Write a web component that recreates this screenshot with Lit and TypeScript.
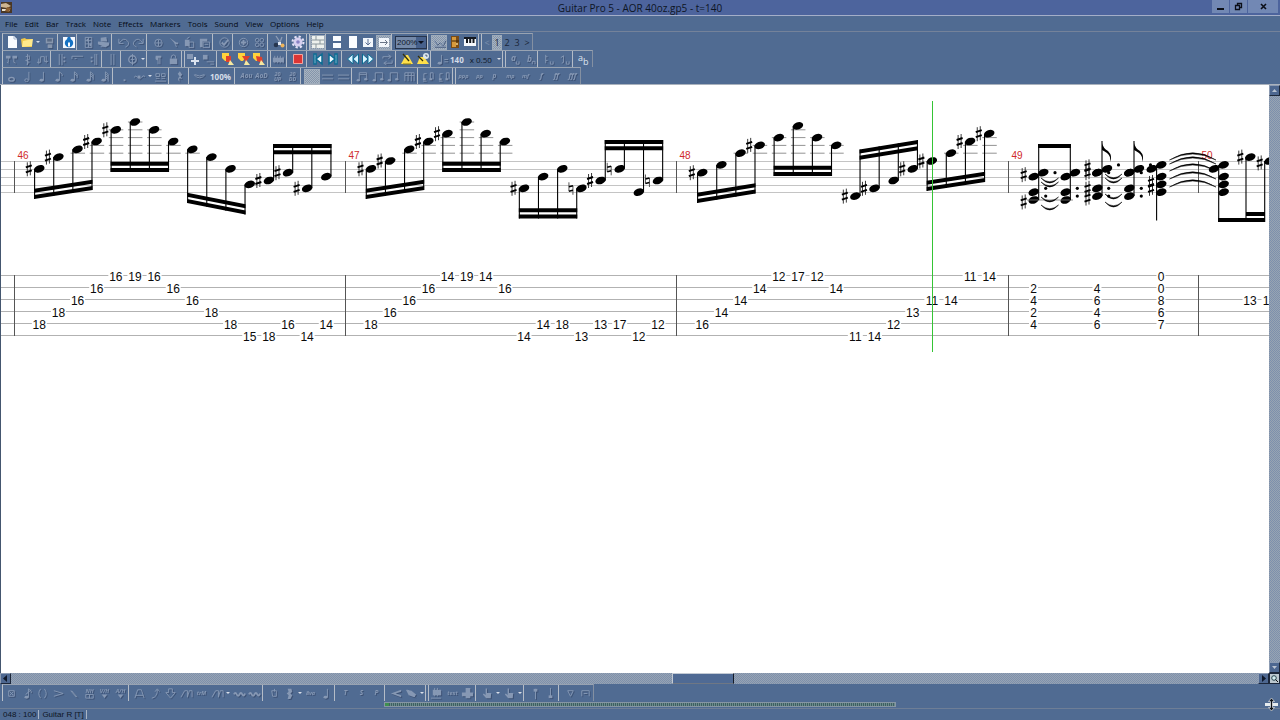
import { LitElement, html, css, svg, nothing } from "lit";
import { customElement } from "lit/decorators.js";
import { classMap } from "lit/directives/class-map.js";
import { styleMap } from "lit/directives/style-map.js";

/* ---------- icons, all on a 14 x 14 grid ---------- */

const line = (d: string) => svg`<path d=${d} fill="none" stroke="currentColor"/>`;
const fill = (d: string, c = "currentColor") => svg`<path d=${d} fill=${c}/>`;
const word = (t: string, size = 6, y = 9) =>
  svg`<text x="7" y=${y} font-size=${size} text-anchor="middle" font-style="italic" font-weight="bold" fill="currentColor">${t}</text>`;

const flagNote = (flags: number, x = 6) => svg`
  <ellipse cx=${x} cy="11" rx="2.2" ry="1.6" fill="currentColor"/>
  <path d="M${x + 2} 11V2" stroke="currentColor" fill="none"/>
  ${Array.from({ length: flags }, (_, i) => svg`<path d="M${x + 2} ${2 + i * 2}l3 2.5v2" stroke="currentColor" fill="none"/>`)}`;

const beamed = (beams: number) => svg`
  <path d="M3.5 11V3h8v7" stroke="currentColor" fill="none"/>
  ${beams > 1 ? line("M3.5 5h8") : nothing}
  <ellipse cx="2.5" cy="11" rx="1.8" ry="1.4" fill="currentColor"/>
  <ellipse cx="10.5" cy="10" rx="1.8" ry="1.4" fill="currentColor"/>`;

const hand = fill("M5 1.500h1.500v5h4.500l-.5 5.500h-5L2 8l1-1 2 1.500z");
const marker = (d: string) => svg`
  <path d="M1 1h7v5l-2 3H4L1 6z" fill="#ffd23c"/><path d=${d} fill="#e0402c"/>
  <path d="M9 8l4 5H7z" fill="#f6e9a0"/>`;

const ICONS: Record<string, unknown> = {
  new: svg`<path d="M3 1h6l3 3v9H3z" fill="#f8fbff"/><path d="M9 1v3h3" fill="none" stroke="#a9b8d0"/>`,
  open: svg`<path d="M1 4l4-1 1 1h6v8H2z" fill="#f1c84a"/><path d="M3 6l10-2-1 7-10 1z" fill="#ffe98c"/>`,
  save: svg`<path d="M3 2h8v6H3z" fill="#8796ad"/><path d="M4.500 3h5v3h-5z" fill="#5a6b86"/><path d="M5 9h5v4H5z" fill="#8796ad"/>`,
  info: svg`<path d="M1 2h12v11H1z" fill="#f4f8ff"/><circle cx="7" cy="8" r="4.200" fill="#1672c4"/><path d="M6 7.500h2v4H6z" fill="#fff"/><circle cx="7" cy="3.500" r="1.800" fill="#1672c4"/>`,
  setup: svg`${line("M3.500 1.500h7v11h-7zM3.500 5h7M3.500 8.500h7M7 1.500v11")}${fill("M5 3h2v3H5zM8 8h2v3H8z")}`,
  print: svg`${fill("M4 2l6-1 1 5H4zM1 6l12 1v3l-4 2-8-3z")}${line("M4 11.500h6")}`,
  undo: line("M2 3v5h5M2.500 7.500Q7 1 11 5T9 12"),
  redo: line("M12 3v5H7M11.500 7.500Q7 1 3 5T5 12"),
  cut: svg`<circle cx="7" cy="7.500" r="4" stroke="currentColor" fill="none"/>${line("M7 4v7M3.500 7.500h7")}`,
  scissors: svg`${fill("M3 2l7 5-1 2zM8 7h4v2H8zM9 8l2 4-2-1z")}`,
  copy: svg`${fill("M2 4h5v7H2z")}${line("M6.500 6.500h5v6h-5zM4 3l3-2")}`,
  paste: svg`${fill("M2 3h8v3H2zM2 6h3v6H2z")}${line("M5.500 6.500h7v6h-7zM7 9h4")}`,
  check: svg`<circle cx="7" cy="7" r="5" stroke="currentColor" fill="none"/><path d="M4 7l2.500 2.500L11 4" stroke="currentColor" stroke-width="2" fill="none"/>`,
  add: svg`<circle cx="7" cy="7" r="4.500" fill="none" stroke="currentColor"/><path d="M7 4v6M4 7h6" stroke="currentColor" stroke-width="2"/>`,
  clover: svg`<g fill="none" stroke="currentColor"><circle cx="4.500" cy="4.500" r="2"/><circle cx="9.500" cy="4.500" r="2"/><circle cx="4.500" cy="9.500" r="2"/><circle cx="9.500" cy="9.500" r="2"/></g>`,
  tuner: svg`<path d="M4 1l4 6 2-5" stroke="#8d9cb5" stroke-width="1.300" fill="none"/><circle cx="4" cy="10" r="2.300" fill="#26364f"/><circle cx="10.500" cy="10.500" r="2" fill="#efb45a"/><path d="M6 7h3v3H6z" fill="#dfe6f2"/>`,
  gear: svg`<circle cx="7" cy="7" r="4.500" fill="#d7d0f0"/><circle cx="7" cy="7" r="5.500" fill="none" stroke="#e4e1f6" stroke-width="2" stroke-dasharray="2.300 2"/><circle cx="7" cy="7" r="1.800" fill="#8a82c4"/>`,
  multi: svg`<path d="M1 1h12v12H1z" fill="#eef1ee"/><path d="M1 5h12M1 9h12M5 1v4M9 5v4M5 9v4" stroke="#8b979c" fill="none"/>`,
  pages: svg`<path d="M3 1h8v5H3zM3 8h8v5H3z" fill="#fafcff"/>`,
  page: svg`<path d="M3 1h8v12H3z" fill="#fafcff"/>`,
  pagedown: svg`<path d="M2 3h10v9H2z" fill="#f2f6fb"/><path d="M7 4v6M4.500 7.500L7 10l2.500-2.500" stroke="#5b6f93" fill="none"/>`,
  pageright: svg`<path d="M2 3h10v9H2z" fill="#f2f6fb"/><path d="M3 7.500h7M8 5l2.500 2.500L8 10" stroke="#6a7688" fill="none"/>`,
  neck: svg`${line("M1 4l3 5 3-3 3 4 3-6M1 11h12")}`,
  cabinet: svg`<path d="M3 1h8v12H3z" fill="#7a4c16"/><path d="M4 2h4v10H4z" fill="#d79a3c"/><path d="M4 6h7" stroke="#3c2408"/><circle cx="9" cy="9" r="1" fill="#f3d58a"/>`,
  piano: svg`<path d="M1 2h12v9H1z" fill="#f6f8fb"/><path d="M1 2h12v2H1zM3 3h2v5H3zM6.200 3h2v5h-2zM9.500 3h2v5h-2z" fill="#14181f"/>`,
  bars: svg`${fill("M1 3h5v3H1zM8 3h5v3H8z")}${line("M3.500 5v5M9.500 5v5l2 1M2 10l2 1")}`,
  clef: line("M7 1v12M5 4l4-1v4L5 8l4 2-3 2"),
  key: line("M1 10h4V4h4v5h4M3 6v6M11 3v8"),
  repL: svg`${line("M3.500 1v12M6.500 1v12")}${fill("M8 4h2v2H8zM8 8h2v2H8z")}`,
  ending: line("M1 6.500V3.500h12M4 6h2"),
  repR: svg`${line("M10.500 1v12M8.500 1v12")}${fill("M4 4h2v2H4zM4 8h2v2H4z")}`,
  dbl: line("M5.500 1v12M8.500 1v12"),
  coda: svg`<circle cx="7" cy="7" r="4" stroke="currentColor" stroke-width="1.500" fill="none"/>${line("M7 1v12M5 7h4")}`,
  para: svg`${fill("M4 3h6v2H9v7H8V5H7v7H6V8Q3 8 4 3z")}`,
  lock: svg`${fill("M3 6h8v6H3z")}${line("M4.500 6Q4 2 7 2t2.500 4")}`,
  trackadd: svg`${fill("M1 2h6v5H1z")}<path d="M9 5v8M5 9h8" stroke="#dbe3ee" stroke-width="2"/>`,
  trackdel: svg`${fill("M1 2h5v5H1z")}${line("M5 9.500h8M9 12h4")}`,
  mk1: marker("M5 4h5v6H5z"),
  mk2: marker("M5 4h8l-4 6z"),
  mk3: marker("M4 4l6 1 1 6-6-2z"),
  mixer: svg`${fill("M1 5h12v5H1z")}${line("M3 3v8M6 3v8M9 3v8M12 4v7")}`,
  stop: svg`<path d="M2.500 2.500h9v9h-9z" fill="#dd3535" stroke="#f2a7a0"/>`,
  first: svg`<path d="M3 2h2v10H3zM11 2v10L5 7z" fill="#eaf8ff" stroke="#0c6d94" stroke-width="1.500"/>`,
  last: svg`<path d="M9 2h2v10H9zM3 2v10l6-5z" fill="#eaf8ff" stroke="#0c6d94" stroke-width="1.500"/>`,
  rew: svg`<path d="M7 2v10L1.500 7zM12.500 2v10L7 7z" fill="#d8f4ff" stroke="#0c6d94"/>`,
  ffw: svg`<path d="M1.500 2v10L7 7zM7 2v10l5.500-5z" fill="#d8f4ff" stroke="#0c6d94"/>`,
  loop: line("M2 6V4h8M8 2l3 2-3 2M12 8v3H4M6 9l-3 2 3 2"),
  metro: svg`<path d="M6 3h2l5 9H1z" fill="#ffe04a"/><path d="M3 2l6 7" stroke="#33300c" stroke-width="1.300"/><path d="M3 12h8" stroke="#8b7a10"/>`,
  count: svg`<path d="M4 5h4l5 7H1z" fill="#ffe04a"/><path d="M2 4l5 5" stroke="#33300c" stroke-width="1.300"/><circle cx="10" cy="4" r="3" fill="#dbe6ee"/><path d="M10 2.500V4h1.500" stroke="#40526d" fill="none"/>`,
  tempo: svg`${flagNote(0, 4)}${line("M9 7h4M9 9.500h4")}`,
  aU: svg`${word("a", 9, 9)}${line("M10 9v3h3V9")}`,
  bU: svg`${word("b", 9, 10)}${line("M10 12V9h3v3")}`,
  dU: svg`${line("M4 2v9M4 4h2M4 8h2M9 9v3h3V9")}`,
  eU: svg`${line("M3 5l3-2v7l-2 1M9 9v3h3V9")}`,
  ab: svg`<text x="1" y="9" font-size="9" fill="#dfe6f0">a</text><text x="6" y="13" font-size="9" fill="#dfe6f0">b</text>`,
  whole: svg`<ellipse cx="7" cy="10" rx="3" ry="2" stroke="currentColor" stroke-width="1.500" fill="none"/>`,
  half: svg`<ellipse cx="6" cy="11" rx="2" ry="1.500" stroke="currentColor" fill="none"/>${line("M8.500 11V2")}`,
  n0: flagNote(0), n1: flagNote(1), n2: flagNote(2), n3: flagNote(3), n4: flagNote(4),
  dot: fill("M6 10h2v2H6z"),
  tuplet: svg`${line("M1 8q2-3 4 0t4 0 4-1")}${fill("M5 6h3v3H5z")}`,
  group: line("M2 4h4v3H2zM8 4h4v3H8zM2 9h4M8 9h4M1 12h12"),
  rest: svg`${fill("M6 1l3 4-2 2 2 3-3-1q-1 2 1 4-4-2-2-5l1-1-2-3 2-2z")}`,
  tie: svg`${line("M1 5q6 7 12 0M2 5q5 3 10 0")}`,
  dyn1: word("Aou", 7), dyn2: word("AoD", 7),
  dyn3: svg`${word("20", 6, 6)}${word("UP", 6, 12)}`,
  dyn4: svg`${word("20", 6, 6)}${word("DD", 6, 12)}`,
  dither: nothing,
  rows: line("M1 5.500h12M1 9.500h12"),
  bm1: beamed(1), bm2: beamed(2),
  bm3: line("M2 12V3h10v9M2 6h10M5.500 3v9M9 3v9"),
  bm4: svg`${line("M2 10V4h3M9 10V3h3v7M1 12h4")}${fill("M1 9h3v2H1zM8 9h3v2H8z")}`,
  ppp: word("ppp"), pp: word("pp"), p: word("p", 7), mp: word("mp"), mf: word("mf"), f: word("f", 8), ff: word("ff", 8), fff: word("fff", 8),
  dead: line("M5 5l4 4M9 5l-4 4M4 4h6v6H4z"),
  grace: svg`${flagNote(1)}${line("M5 8l6-5")}`,
  ghost: line("M5 2q-4 5 0 10M9 2q4 5 0 10"),
  accent: line("M2 4l10 3-10 3"),
  slash: line("M4 4l6 7M5 4l6 7"),
  har: svg`${word("NH", 6, 6)}${line("M3 8h8v4H3zM7 8v4")}`,
  vib: svg`${word("V/H", 6, 6)}${fill("M4 8h6l-3 4z")}`,
  ah: svg`${word("A/H", 6, 6)}${fill("M4 8h6l-3 4z")}`,
  tri: line("M2 12l3-9h4l3 9M3 9h8"),
  bend: line("M3 12q6-1 6-9M6.500 5L9 2l2.500 3"),
  dive: line("M5 2h4v4h3l-5 6-5-6h3z"),
  slide: line("M1 11l4-7h3v7M8 11l2-7h3v7"),
  trill: word("trM", 6),
  wave: svg`<path d="M1 8q1.500-3 3 0t3 0 3 0 3-1" fill="none" stroke="currentColor" stroke-width="2"/>`,
  pop: line("M4 4h5v6H5zM7 2v3"),
  trem: svg`${fill("M5 2h4l1 3-2 2 2 2-2 4H5l1-4-2-2 2-2z")}`,
  rse: word("8va", 6),
  T: word("T", 7), S: word("S", 7), P: word("P", 7),
  fade: svg`${fill("M1 7l11-4v2L6 7l6 2v2z")}`,
  wah: svg`${fill("M1 3l6 1 5 4-2 3-6-2z")}${line("M3 3l8 8")}`,
  chord: svg`${fill("M3 3h9v6H3z")}${line("M1 12h11M5 1v9M8 1v9")}`,
  text: word("text", 6), block: svg`${fill("M5 1h5v11H5zM1 6h12v4H1z")}`,
  hand,
  up: svg`${line("M7 13V2")}${fill("M5 2h4v3H5z")}`,
  down: svg`${line("M7 1v9")}${fill("M5 9h4v3H5z")}`,
  vee: line("M4 4l3 6 3-6M4 4h6"), frog: line("M3 10V4h8v6M5 7h4"),
};

/* "|" separator, "#" separator with grip, "v" drop-down arrow,
   "name!" pressed, "name+" in full colour */
const ROW1 = "new+ open+ v save | info+ | setup print | undo redo | cut scissors copy paste | check | add clover | tuner+ | gear+ # multi!+ | pages+ page+ pagedown+ pageright!+ | ZOOM | neck! cabinet+ piano+ # PAGER";
const ROW2 = "bars clef key | repL ending repR | dbl | coda v | para lock # trackadd+ trackdel | mk1+ mk2+ mk3+ # mixer | stop+ | first+ last+ | rew+ ffw+ | loop | metro+ count+ | tempo BPM SPEED v # aU bU | dU eU | ab+";
const ROW3 = "whole half n0 n1 n2 n3 n4 | dot tuplet v group | rest | tie PCT | dyn1 dyn2 dyn3 dyn4 | dither! rows rows | bm2 bm1 bm1 bm3 | bm4 bm4 # ppp pp p mp mf f ff fff";
const ROW4 = "dead grace ghost accent slash har vib ah | tri bend dive slide trill slide v wave wave | pop trem v rse n0 | T S P | fade wah v # chord text block | hand v hand v | up down | vee frog";

@customElement("tool-strip")
export class ToolStrip extends LitElement {
  static properties = { items: {}, label: {} };
  declare items: string;
  declare label: string;

  static styles = css`
    :host { display: flex; }
    .strip {
      display: flex; align-items: center; height: 17px; box-sizing: border-box;
      padding-left: 1px; border-top: 1px solid #98a3b2; border-right: 1px solid #8490a2;
      border-left: 1px solid #b9c0ca; margin-left: 2px;
      font: 9px "Open Sans", sans-serif; color: #d5dde9;
    }
    button {
      flex: none; width: 15px; height: 15px; padding: 0; border: 0; background: none;
      color: #8698b4; display: grid; place-items: center; font: inherit;
    }
    button:nth-of-type(even) { width: 16px; }
    button svg { width: 13px; height: 13px; overflow: visible; filter: drop-shadow(1px 1px 0 #3d5275); }
    button.full svg { width: 14px; height: 14px; filter: none; }
    button.on {
      background: repeating-conic-gradient(#a9b4c1 0 25%, #8495ab 0 50%) 0 0 / 2px 2px;
      outline: 1px solid #9eabba; outline-offset: -1px;
    }
    .strip > button.drop { width: 6px; }
    .drop::before { content: ""; border: 2px solid transparent; border-top: 2px solid #d8dee8; border-bottom: 0; }
    .sep { flex: none; width: 4px; height: 16px; box-sizing: border-box; border-left: 1px solid #b4bcc7; border-right: 2px solid transparent; }
    .grip { border-right: 1px solid #b4bcc7; }
    .zoom {
      display: flex; box-sizing: border-box; width: 32px; height: 13px; border: 1px solid #26344c;
      appearance: none; border-radius: 0; background: linear-gradient(#47618c, #47618c) right / 10px 100% no-repeat, #7489a9;
      font: 8px "Liberation Sans", sans-serif; color: #10182a; padding: 0 0 0 1px;
    }
    .combo { display: grid; align-items: center; }
    .combo > * { grid-area: 1 / 1; }
    .combo i { justify-self: end; margin-right: 3px; border: 3px solid transparent; border-top: 3px solid #0c1220; border-bottom: 0; }
    .strip > .pg { width: 10px; color: #1a2538; }
    .strip > .pg.off { color: #7d90ae; }
    .bpm { font-weight: bold; font-size: 8px; }
    .speed { font-size: 8px; color: #0f1828; padding: 0 4px 0 6px; }
    .pct { font-size: 8px; font-weight: bold; width: 27px; text-align: center; }
  `;

  private item(t: string) {
    switch (t) {
      case "|": return html`<span class="sep"></span>`;
      case "#": return html`<span class="sep grip"></span>`;
      case "v": return html`<button class="drop" aria-label="More"></button>`;
      case "ZOOM": return html`<span class="combo"><select class="zoom" aria-label="Zoom"><option>200%</option></select><i></i></span>`;
      case "BPM": return html`<span class="bpm">140</span>`;
      case "SPEED": return html`<span class="speed">x 0.50</span>`;
      case "PCT": return html`<span class="pct">100%</span>`;
      case "PAGER": return ["<", "1", "2", "3", ">"].map(
        (p) => html`<button class=${classMap({ pg: true, off: p === "<", on: p === "1" })}>${p}</button>`);
    }
    const name = t.replace(/[!+]/g, "");
    return html`<button class=${classMap({ on: t.includes("!"), full: t.includes("+") })} aria-label=${name}>
      <svg viewBox="0 0 14 14" aria-hidden="true">${ICONS[name]}</svg></button>`;
  }

  render() {
    return html`<div class="strip" role="toolbar" aria-label=${this.label}>${this.items.split(" ").map((t) => this.item(t))}</div>`;
  }
}

/* ---------- score ---------- */

const TOP = 76;          // first staff line
const HALF = 3.9;        // distance between two neighbouring pitches
const TAB = 190.5;       // first tablature line
const STRING = 12;       // distance between strings
const STEP = 19.13;      // distance between sixteenth notes
const THICK = 4;         // beam thickness

interface Beam { at: number; n: number; up?: boolean; y1: number; y2: number; }
interface Bar { num: number; x: number; first: number; pitch: number[]; marks: string; tab: string; beams: Beam[]; }

const BARS: Bar[] = [
  { num: 46, x: 14.5, first: 39.300, pitch: [2, -1, -3, -5, -8, -10, -8, -5, -3, -1, 2, 6, 5, 3, 7, 4],
    marks: "##.##.......###.",
    tab: "18/5 18/4 16/3 16/2 16/1 19/1 16/1 16/2 16/3 18/4 18/5 15/6 18/6 16/5 14/6 14/5",
    beams: [{ at: 0, n: 4, y1: 114, y2: 105 }, { at: 4, n: 4, y1: 87, y2: 87 }, { at: 8, n: 4, y1: 118, y2: 129.500 }, { at: 12, n: 4, up: true, y1: 59, y2: 59 }] },
  { num: 47, x: 345.5, first: 371, pitch: [2, 0, -3, -5, -7, -10, -7, -5, 7, 4, 2, 7, 5, 2, 8, 5],
    marks: "##.##...#..n#n.n",
    tab: "18/5 16/4 16/3 16/2 14/1 19/1 14/1 16/2 14/6 14/5 18/5 13/6 13/5 17/5 12/6 12/5",
    beams: [{ at: 0, n: 4, y1: 114, y2: 105 }, { at: 4, n: 4, y1: 87, y2: 87 }, { at: 8, n: 4, y1: 133.500, y2: 133.500 }, { at: 12, n: 4, up: true, y1: 55, y2: 55 }] },
  { num: 48, x: 676.5, first: 702.300, pitch: [3, 1, -2, -4, -6, -9, -6, -4, 9, 7, 5, 2, 0, -2, -5, -7],
    marks: "#..#....##.##.##",
    tab: "16/5 14/4 14/3 14/2 12/1 17/1 12/1 14/2 11/6 14/6 12/5 13/4 11/3 14/3 11/1 14/1",
    beams: [{ at: 0, n: 4, y1: 118, y2: 108.500 }, { at: 4, n: 4, y1: 91, y2: 91 }, { at: 8, n: 4, up: true, y1: 64.500, y2: 55 }, { at: 12, n: 4, y1: 106, y2: 97 }] },
];

const pitchY = (s: number) => TOP + s * HALF;

const head = (x: number, y: number) =>
  svg`<ellipse cx=${x} cy=${y} rx="5.400" ry="3.600" transform="rotate(-20 ${x} ${y})"/>`;
const sharp = (x: number, y: number) => svg`
  <path d="M${x - 1.5} ${y - 6.500}v14M${x + 1.5} ${y - 7.500}v14" stroke="#222" stroke-width=".9"/>
  <path d="M${x - 3} ${y - 1.500}l6-2M${x - 3} ${y + 3.500}l6-2" stroke="#000" stroke-width="1.900"/>`;
const natural = (x: number, y: number) => svg`
  <path d="M${x - 2} ${y - 6}v9M${x + 2} ${y - 2.500}v9" stroke="#444" stroke-width=".9"/>
  <path d="M${x - 2} ${y - 1.500}l4-1M${x - 2} ${y + 3}l4-1" stroke="#000" stroke-width="1.700"/>`;
const stem = (x: number, a: number, b: number) => svg`<path d="M${x} ${a}V${b}" stroke="#000" stroke-width="1.100"/>`;
const slab = (x1: number, y1: number, x2: number, y2: number, t = THICK) =>
  svg`<path d="M${x1} ${y1}L${x2} ${y2}v${t}L${x1} ${y1 + t}z"/>`;
const ledgers = (x: number, s: number) => {
  const out = [];
  for (let k = -2; k >= s; k -= 2) out.push(svg`<path d="M${x - 7} ${pitchY(k)}h14.500" stroke="#777" stroke-width=".8"/>`);
  return out;
};
const fret = (x: number, string: number, t: string) => {
  const y = TAB + (string - 1) * STRING;
  const w = t.length * 6 + 3;
  return svg`<rect x=${x - w / 2} y=${y - 5} width=${w} height="11" fill="#fff"/>
    <text class="fret" x=${x} y=${y + 5.5} text-anchor="middle">${t}</text>`;
};

const sixteenths = (b: Bar) => {
  const xs = b.pitch.map((_, i) => b.first + i * STEP);
  const frets = b.tab.split(" ").map((p) => p.split("/"));
  return svg`
    ${b.pitch.map((s, i) => svg`${ledgers(xs[i], s)}${head(xs[i], pitchY(s))}
      ${b.marks[i] === "#" ? sharp(xs[i] - 10.5, pitchY(s)) : b.marks[i] === "n" ? natural(xs[i] - 10.5, pitchY(s)) : nothing}`)}
    ${b.beams.map((m) => {
      const off = m.up ? 4.700 : -4.700;
      const a = xs[m.at] + off, z = xs[m.at + m.n - 1] + off;
      const dir = m.up ? 1 : -1;
      const lift = m.up ? 0 : -THICK;
      return svg`
        ${slab(a - .5, m.y1 + lift, z + .5, m.y2 + lift)}
        ${slab(a - .5, m.y1 + lift + dir * 6.3, z + .5, m.y2 + lift + dir * 6.3)}
        ${xs.slice(m.at, m.at + m.n).map((x, i) =>
          stem(x + off, pitchY(b.pitch[m.at + i]), m.y1 + ((m.y2 - m.y1) * i) / (m.n - 1)))}`;
    })}
    ${frets.map(([t, s], i) => fret(xs[i], Number(s), t))}`;
};

const chord = (x: number, upper: number, rest: number[], upperX: number) =>
  svg`${head(upperX, pitchY(upper))}${rest.map((s) => head(x, pitchY(s)))}`;
const dots = (list: number[][]) => list.map(([x, s]) => svg`<circle cx=${x} cy=${pitchY(s)} r="1.600"/>`);
const arc = (x1: number, x2: number, y: number, h: number) =>
  svg`<path d="M${x1} ${y}Q${(x1 + x2) / 2} ${y + h * 2} ${x2} ${y}Q${(x1 + x2) / 2} ${y + h * 2 - 2.500} ${x1} ${y}z" stroke="#000" stroke-width=".5"/>`;

const closing = svg`
  ${chord(1033.700, 3, [4, 8, 10], 1043.300)}${chord(1065.700, 3, [4, 8, 10], 1075)}
  <path d="M1027 115h46" stroke="#777" stroke-width=".8"/>
  ${stem(1038.700, 115, 59)}${stem(1070.300, 115, 59)}${slab(1038, 59, 1071, 59)}
  ${sharp(1023.700, pitchY(3.5))}${sharp(1023.700, pitchY(10.5))}
  ${dots([[1055, 3], [1045.700, 7], [1045.700, 9], [1077.300, 7], [1077.300, 9]])}
  ${[93, 97, 112, 120].map((y) => arc(1041, 1058.500, y, 5))}
  ${chord(1097.300, 3, [3, 7, 9], 1097.300)}${head(1107, pitchY(2))}
  ${chord(1129.300, 3, [3, 7, 9], 1129.300)}${head(1139, pitchY(2))}
  ${stem(1102, 111, 56)}${stem(1134, 111, 56)}
  ${[1102, 1134].map((x) => svg`<path d="M${x} 58q1 5 6 8 5 5 2 11 1-6-3-9-3-2-5-3z"/>`)}
  ${[1.5, 3, 7, 9.5].map((s) => sharp(1087.500, pitchY(s)))}
  ${dots([[1118.500, 1], [1108.700, 3], [1108.700, 7], [1108.700, 9], [1141.300, 3], [1141.300, 7], [1141.300, 9], [1150.500, 1]])}
  ${[89, 93, 109, 117].map((y) => arc(1105, 1122, y, 5))}
  ${chord(1161.300, 1, [4, 6, 8], 1161.300)}${head(1151.700, pitchY(2))}
  ${stem(1156.600, pitchY(1), 135.500)}${sharp(1151, pitchY(5.5))}${sharp(1151, pitchY(7))}
  ${[75, 79, 86, 94, 102].map((y) => arc(1169.500, 1216, y, -6))}
  ${chord(1223.700, 1, [4, 6, 8], 1223.700)}${head(1214, pitchY(2))}
  ${stem(1218.700, pitchY(1), 137)}
  ${sharp(1240.300, pitchY(-1))}${head(1250.300, pitchY(-1))}${stem(1246, pitchY(-1), 137)}
  ${sharp(1259.700, pitchY(.5))}${head(1269.500, pitchY(0))}${stem(1264.700, pitchY(0), 137)}
  ${slab(1218, 133, 1265, 133)}${slab(1246, 127, 1265, 127)}
  ${["2", "4", "2", "4"].map((t, i) => fret(1033.500, i + 2, t))}
  ${["4", "6", "4", "6"].map((t, i) => fret(1097, i + 2, t))}
  ${["0", "0", "8", "6", "7"].map((t, i) => fret(1161, i + 1, t))}
  ${fret(1250, 3, "13")}${fret(1266, 3, "1")}`;

@customElement("score-view")
export class ScoreView extends LitElement {
  static styles = css`
    :host { display: block; overflow: hidden; background: #fff; min-width: 0; }
    svg { display: block; width: 100%; height: 100%; }
    .fret { font: 12px "Liberation Sans", sans-serif; fill: #0a0a0a; }
    .num { font: 10px "Liberation Sans", sans-serif; fill: #d02a2a; }
    .staff { stroke: #c4c4c4; }
    .string { stroke: #b2b2b2; }
    .bar { stroke: #555; }
    .cursor { fill: #35c435; }
  `;

  render() {
    const edges = [...BARS.map((b) => b.x), 1008.5, 1198.5];
    return html`<svg role="img" aria-label="Score">
      ${[76.5, 84.5, 92.5, 100.5, 107.5].map((y) => svg`<line class="staff" x1="0" x2="100%" y1=${y} y2=${y}/>`)}
      ${[0, 1, 2, 3, 4, 5].map((i) => svg`<line class="string" x1="0" x2="100%" y1=${TAB + i * STRING} y2=${TAB + i * STRING}/>`)}
      <g transform="translate(-1 0)">
        ${edges.map((x, i) => svg`<path class="bar" d="M${x} 76v32M${x} 190v61"/><text class="num" x=${x + 3} y="74">${46 + i}</text>`)}
        ${BARS.map(sixteenths)}
        ${closing}
        <rect class="cursor" x="932" y="16" width="1" height="251"/>
      </g>
    </svg>`;
  }
}

/* ---------- window ---------- */

const MENU = ["File", "Edit", "Bar", "Track", "Note", "Effects", "Markers", "Tools", "Sound", "View", "Options", "Help"];

@customElement("app-root")
export class AppRoot extends LitElement {
  static styles = css`
    :host { display: flex; flex-direction: column; height: 100vh; background: #506b92; color: #0d1524; font: 8px "Open Sans", sans-serif; overflow: hidden; }
    button { font: inherit; color: inherit; padding: 0; border: 0; background: none; }
    .title { display: grid; grid-template-columns: 1fr auto 1fr; align-items: center; height: 15px; background: #4d649d; border-bottom: 1px solid #a4aec8; }
    .title svg { width: 11px; height: 11px; margin-left: 1px; }
    .title h1 { margin: 0; font: 10px "Open Sans", sans-serif; }
    .win { display: flex; gap: 1px; justify-content: flex-end; align-self: start; padding-right: 2px; }
    .win button { width: 17px; height: 13px; background: #7288b4; display: grid; place-items: center; }
    .win button:last-child { width: 30px; }
    .win svg { width: 9px; height: 9px; margin: 0; }
    .menu { display: flex; gap: 7px; height: 15px; align-items: center; padding-left: 5px; border-bottom: 1px solid #74829a; color: #050a14; }
    .tools { padding-top: 1px; border-bottom: 1px solid #aab2bd; }
    .work { flex: 1; min-height: 0; display: flex; border-left: 1px solid #44566f; }
    score-view { flex: 1; }
    .track { background: repeating-conic-gradient(#98a4b2 0 25%, #7d90ad 0 50%) 0 0 / 2px 2px; }
    .vbar { width: 11px; display: flex; flex-direction: column; justify-content: space-between; }
    .sb { width: 11px; height: 11px; display: grid; place-items: center; background: #4d6790; box-sizing: border-box; border: 1px solid #8d9cb3; border-right-color: #1c273a; border-bottom-color: #1c273a; }
    .sb svg { width: 7px; height: 7px; }
    .hbar { display: flex; height: 11px; }
    .lane { flex: 1; }
    .thumb { height: 11px; box-sizing: border-box; background: #4f6a94; border: 1px solid #c3cad4; border-right-color: #141b28; border-bottom-color: #6f7784; }
    .sb.lens { background: #bcc8cf; border-color: #1c273a; }
    .song { display: flex; height: 7px; border-bottom: 1px solid #6e7e96; }
    .song input {
      appearance: none; margin: 1px 0 0 30%; width: 40%; height: 5px; border: 1px solid #8796a4; box-sizing: border-box;
      background: repeating-linear-gradient(90deg, #3f5f62 0 1px, #6b8a8b 1px 2px);
    }
    .song input::-webkit-slider-thumb { appearance: none; width: 4px; height: 3px; background: #3f8f4f; }
    .status { display: flex; height: 11px; align-items: center; font: 8px "Liberation Sans", sans-serif; }
    .status span { padding: 0 2px 0 3px; border-right: 1px solid #a9b4c4; }
    .resize { position: absolute; right: 2px; bottom: 9px; width: 13px; height: 13px; }
  `;

  private arrow(d: string, label: string, c = "#0e1728") {
    return html`<button class="sb" aria-label=${label}><svg viewBox="0 0 7 7"><path d=${d} fill=${c} /></svg></button>`;
  }

  render() {
    return html`
      <header class="title">
        <svg viewBox="0 0 11 11"><path d="M0 0h11v11H0z" fill="#4a3724" /><path d="M0 2l5-1 5 3-4 2-6-1z" fill="#cdb592" /><path d="M1 7h8v2H1z" fill="#e9e2d2" /><path d="M6 5l4 1-2 4-4-1z" fill="#8c5f31" /></svg>
        <h1>Guitar Pro 5 - AOR 40oz.gp5 - t=140</h1>
        <div class="win">
          <button aria-label="Minimize"><svg viewBox="0 0 9 9"><path d="M1 6h7v2H1z" fill="#0b0f18" /></svg></button>
          <button aria-label="Restore"><svg viewBox="0 0 9 9"><path d="M3.500 3V1.500h4v4H6M1.500 3.500h4v4h-4z" fill="none" stroke="#0b0f18" stroke-width="1.300" /></svg></button>
          <button aria-label="Close"><svg viewBox="0 0 9 9"><path d="M2 2l5 5M7 2L2 7" stroke="#0b0f18" stroke-width="1.600" /></svg></button>
        </div>
      </header>
      <nav class="menu">${MENU.map((m) => html`<button>${m}</button>`)}</nav>
      <div class="tools">
        <tool-strip label="File" .items=${ROW1}></tool-strip>
        <tool-strip label="Playback" .items=${ROW2}></tool-strip>
        <tool-strip label="Notes" .items=${ROW3}></tool-strip>
      </div>
      <main class="work">
        <score-view></score-view>
        <div class="vbar track">
          ${this.arrow("M1 5h5L3.500 2z", "Scroll up", "#b9c3d1")}
          ${this.arrow("M1 2h5L3.500 5z", "Scroll down", "#b9c3d1")}
        </div>
      </main>
      <div class="hbar">
        ${this.arrow("M5 0v7L1 3.500z", "Scroll left")}
        <div class="lane track"><div class="thumb" style=${styleMap({ width: "5%", marginLeft: "53%" })}></div></div>
        ${this.arrow("M2 0v7l4-3.500z", "Scroll right")}
        <button class="sb lens" aria-label="Magnify"><svg viewBox="0 0 7 7"><circle cx="3" cy="3" r="2.300" fill="#d7f0f2" stroke="#27434d" /><path d="M4.500 4.500L7 7" stroke="#111" /></svg></button>
      </div>
      <tool-strip label="Effects" .items=${ROW4}></tool-strip>
      <div class="song"><input type="range" aria-label="Song position" value="0" /></div>
      <footer class="status"><span>048 : 100</span><span>Guitar R [T]</span></footer>
      <svg class="resize" viewBox="0 0 13 13"><path d="M0 5h13v3H0z" fill="#e6ebee" /><path d="M6.500 0l3 3.500H7.500v6h2l-3 3.500-3-3.500h2v-6h-2z" fill="#0e1116" stroke="#e6ebee" stroke-width=".7" /></svg>
    `;
  }
}
